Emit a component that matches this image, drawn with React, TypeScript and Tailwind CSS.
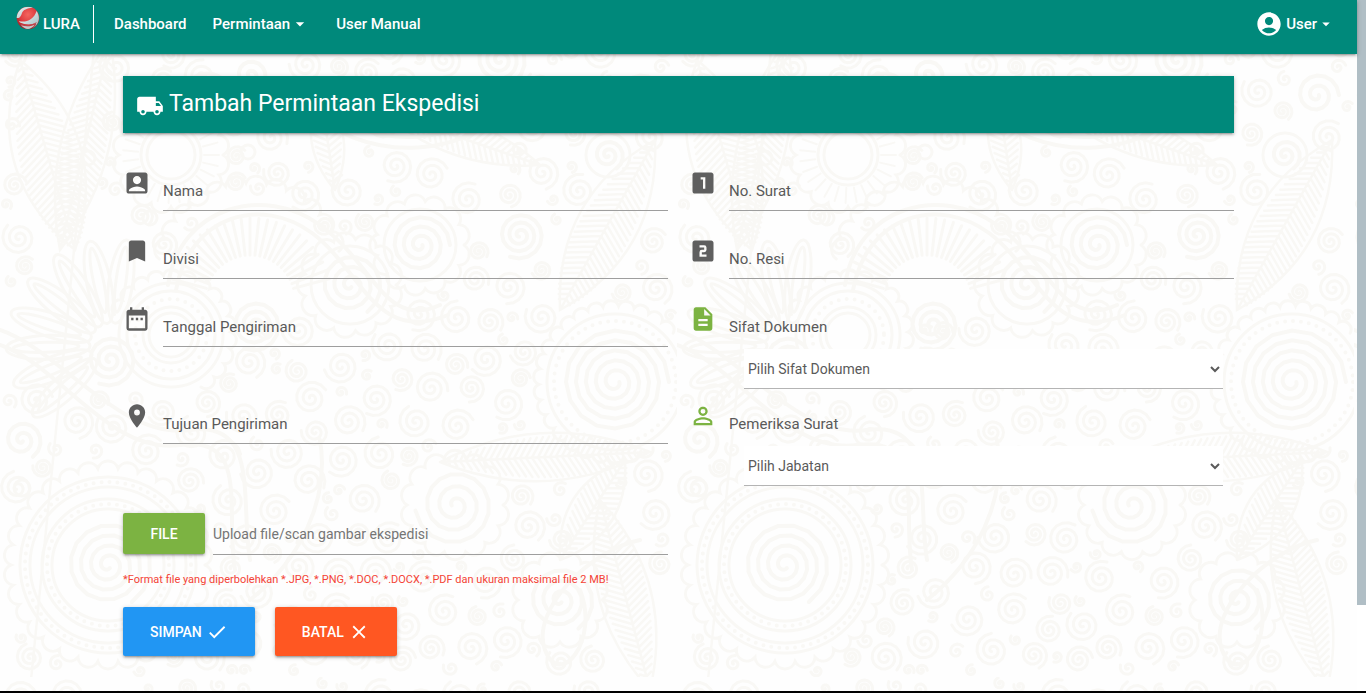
import type { ReactNode } from "react";
import type { IconType } from "react-icons";
import {
  MdAccountBox,
  MdAccountCircle,
  MdArrowDropDown,
  MdBookmark,
  MdCheck,
  MdClose,
  MdDateRange,
  MdDescription,
  MdLocalShipping,
  MdLocationOn,
  MdLooksOne,
  MdLooksTwo,
  MdPersonOutline,
} from "react-icons/md";

const RAISED =
  "shadow-[0_2px_2px_0_rgba(0,0,0,0.14),0_3px_1px_-2px_rgba(0,0,0,0.12),0_1px_5px_0_rgba(0,0,0,0.2)]";

/* ---------- batik background ---------- */

const TILE = 677;

function spiral(cx: number, cy: number, r: number, turns: number, start = 0) {
  const steps = Math.round(turns * 16);
  let d = "";
  for (let i = 0; i <= steps; i++) {
    const t = i / steps;
    const a = start + t * turns * Math.PI * 2;
    const k = r * (0.08 + 0.92 * t);
    d += `${i ? "L" : "M"}${(cx + k * Math.cos(a)).toFixed(1)} ${(cy + k * Math.sin(a)).toFixed(1)}`;
  }
  return d;
}

function fan(cx: number, cy: number, r0: number, r1: number, a0: number, a1: number, n: number) {
  let d = "";
  for (let i = 0; i <= n; i++) {
    const a = ((a0 + ((a1 - a0) * i) / n) * Math.PI) / 180;
    d += `M${(cx + r0 * Math.cos(a)).toFixed(1)} ${(cy + r0 * Math.sin(a)).toFixed(1)}L${(cx + r1 * Math.cos(a)).toFixed(1)} ${(cy + r1 * Math.sin(a)).toFixed(1)}`;
  }
  return d;
}

function scallops(cx: number, cy: number, r: number, n: number, a0 = 0, a1 = 360) {
  const point = (i: number) => {
    const a = ((a0 + ((a1 - a0) * i) / n) * Math.PI) / 180;
    return `${(cx + r * Math.cos(a)).toFixed(1)} ${(cy + r * Math.sin(a)).toFixed(1)}`;
  };
  const bump = ((((a1 - a0) / n) * Math.PI) / 180) * r * 0.52;
  let d = `M${point(0)}`;
  for (let i = 1; i <= n; i++) d += `A${bump} ${bump} 0 0 1 ${point(i)}`;
  return d;
}

function leaf(x0: number, y0: number, x1: number, y1: number, w: number) {
  const dx = x1 - x0;
  const dy = y1 - y0;
  const len = Math.hypot(dx, dy);
  const ux = dx / len;
  const uy = dy / len;
  const mx = (x0 + x1) / 2;
  const my = (y0 + y1) / 2;
  let d = `M${x0} ${y0}Q${mx - uy * w * 2} ${my + ux * w * 2} ${x1} ${y1}Q${mx + uy * w * 2} ${my - ux * w * 2} ${x0} ${y0}M${x0} ${y0}L${x1} ${y1}`;
  for (let s = 8; s < len - 8; s += 6) {
    const t = s / len;
    const half = 4 * w * t * (1 - t) * 0.85;
    const px = x0 + dx * t;
    const py = y0 + dy * t;
    const f = half * 0.6;
    d += `M${px} ${py}L${px - uy * half + ux * f} ${py + ux * half + uy * f}M${px} ${py}L${px + uy * half + ux * f} ${py - ux * half + uy * f}`;
  }
  return d;
}

const LARGE_SPIRALS: [number, number, number, number, number][] = [
  [420, 245, 30, 3, 0], [350, 285, 32, 3, 1], [110, 360, 26, 3, 2], [615, 382, 54, 5, 0],
  [455, 505, 40, 3, 3], [108, 565, 44, 4, 1], [255, 325, 26, 3, 2], [560, 600, 34, 3, 1],
  [640, 95, 22, 2, 0], [608, 155, 16, 2, 1], [250, 75, 20, 2, 3], [520, 235, 24, 3, 2],
  [500, 60, 26, 3, 1], [22, 440, 20, 2, 1],
];

const RINGS: [number, number, number][] = [
  [171, 155, 24], [171, 155, 30], [171, 335, 22], [171, 335, 28], [171, 335, 44], [171, 335, 52],
  [108, 565, 56], [108, 565, 66], [108, 565, 78], [108, 565, 88], [88, 158, 7], [248, 152, 7],
  [22, 488, 8], [608, 155, 22], [150, 218, 7], [420, 245, 36], [350, 285, 39], [615, 382, 68],
];

const BEADS: [number, number, number][] = [
  [171, 335, 36], [108, 565, 61], [108, 565, 83], [615, 382, 61],
];

const LEAVES: [number, number, number, number, number][] = [
  [20, 60, 75, 250, 34], [110, 40, 60, 250, 24], [655, 140, 560, 310, 30], [440, 462, 650, 452, 24],
  [560, 560, 625, 460, 22], [650, 690, 600, 500, 26], [380, 110, 540, 165, 18], [335, 190, 320, 90, 16],
  [30, 690, 95, 40, 0],
];

const SCALLOPS: [number, number, number, number, number, number][] = [
  [250, 275, 92, 12, 190, 345], [171, 335, 60, 14, 200, 420], [108, 565, 97, 30, 0, 360],
  [420, 245, 44, 13, 0, 360], [350, 285, 46, 13, 0, 360], [615, 382, 76, 22, 60, 320],
  [171, 155, 52, 16, 0, 360], [455, 505, 48, 14, 0, 360], [560, 600, 42, 12, 0, 360],
];

const ARCS =
  "M168 285C180 205 265 185 320 225S385 330 440 305M176 290C190 214 262 196 312 233S375 345 448 315M300 100C360 170 480 160 520 90M310 95C365 155 470 150 510 85M0 330C60 350 120 440 190 430S240 500 250 560M0 345C60 365 110 455 180 445S225 510 235 570M640 540C590 550 530 610 545 650S600 640 580 590M190 80C215 60 245 90 225 115S190 140 200 100M250 600C300 560 330 500 320 440";

/** Areas taken by the large motifs, as [x, y, radius]. */
const TAKEN: [number, number, number][] = [
  [171, 155, 55], [171, 335, 62], [108, 565, 102], [615, 382, 80], [420, 245, 48], [350, 285, 50],
  [455, 505, 52], [560, 600, 46], [255, 260, 62], [60, 100, 45], [60, 150, 45], [70, 210, 35],
  [100, 290, 60], [50, 330, 50], [110, 360, 30], [640, 95, 26], [608, 155, 28], [250, 75, 24],
  [640, 190, 32], [600, 240, 34], [575, 285, 26], [520, 235, 28], [500, 60, 30], [490, 458, 20],
  [540, 455, 28], [590, 455, 26], [595, 510, 30], [615, 560, 32], [635, 620, 34], [645, 660, 26],
  [430, 130, 26], [480, 145, 26], [330, 140, 28], [22, 440, 24], [350, 140, 14],
];

/** Packs small spirals into the space left between the large motifs. */
function packSpirals() {
  const placed: [number, number, number][] = [];
  let seed = 7;
  const random = () => {
    seed = (seed * 16807) % 2147483647;
    return seed / 2147483647;
  };
  for (const r of [17, 14, 12, 10, 8, 6]) {
    for (let i = 0; i < 1400; i++) {
      const x = r + random() * (TILE - 2 * r);
      const y = r + random() * (TILE - 2 * r);
      const free =
        TAKEN.every(([a, b, c]) => Math.hypot(x - a, y - b) > r + c) &&
        placed.every(([a, b, c]) => Math.hypot(x - a, y - b) > r + c + 1);
      if (free) placed.push([x, y, r]);
    }
  }
  return placed;
}

const SMALL_SPIRALS = packSpirals()
  .map(([x, y, r], i) => spiral(x, y, r, r > 9 ? 2.4 : 1.4, i * 1.7))
  .join("");

const PETALS = [138, 158, 178, 198, 218, 238, 258, 278];

function BatikBackground() {
  return (
    <svg aria-hidden="true" className="absolute inset-0 h-full w-full">
      <defs>
        <pattern id="batik" width={TILE} height={TILE} patternUnits="userSpaceOnUse">
          <g fill="none" stroke="#f9f8f5" strokeWidth="3" strokeLinecap="round">
            {LEAVES.map((v, i) => (
              <path key={i} d={leaf(...v)} strokeWidth="2.5" />
            ))}
            <path d={ARCS} strokeWidth="4" />
            <path d={fan(250, 300, 45, 82, 195, 345, 24)} />
            <path d={fan(171, 155, 33, 48, 0, 345, 26)} strokeWidth="2" />
            {PETALS.map((a) => (
              <g key={a} transform={`translate(112 345) rotate(${a})`}>
                <ellipse cx="64" cy="0" rx="42" ry="12" />
                <ellipse cx="66" cy="0" rx="33" ry="5" />
              </g>
            ))}
            {LARGE_SPIRALS.map(([x, y, r, n, s], i) => (
              <path key={i} d={spiral(x, y, r, n, s)} strokeWidth="4" />
            ))}
            {SCALLOPS.map((v, i) => (
              <path key={i} d={scallops(...v)} />
            ))}
            <path d={SMALL_SPIRALS} />
            {RINGS.map(([x, y, r], i) => (
              <circle key={i} cx={x} cy={y} r={r} />
            ))}
            {BEADS.map(([x, y, r], i) => (
              <circle key={i} cx={x} cy={y} r={r} strokeWidth="4" strokeDasharray="0 8" />
            ))}
          </g>
        </pattern>
      </defs>
      <rect width="100%" height="100%" fill="#fefefe" />
      <rect width="100%" height="100%" fill="url(#batik)" />
    </svg>
  );
}

/* ---------- header ---------- */

function Logo() {
  return (
    <svg viewBox="0 0 24 24" aria-hidden="true" className="mb-3 h-6 w-6">
      <defs>
        <radialGradient id="ball" cx="0.5" cy="0.35" r="0.7">
          <stop offset="0" stopColor="#f4655f" />
          <stop offset="0.55" stopColor="#dd3a3f" />
          <stop offset="1" stopColor="#8f1a22" />
        </radialGradient>
        <linearGradient id="silver" x1="0" y1="0" x2="1" y2="1">
          <stop offset="0" stopColor="#f4f6f6" />
          <stop offset="1" stopColor="#9dbcc2" />
        </linearGradient>
      </defs>
      <circle cx="12" cy="12" r="11.3" fill="url(#ball)" />
      <path d="M.7 12C1 6 5 1.500 11 1C14 .8 16 1.500 17 2C11 2 7 4 6 7C5 10 4 12.500 .7 12Z" fill="url(#silver)" />
      <path d="M3 15C9 17 18 14 20.500 5C25 11 23 19 16 22.500C19 20.500 20 19 20 17C16 19 9 19 4 16.500Z" fill="url(#silver)" />
      <path d="M5 19C10 21 15 20.500 19 18.500C17 21.500 14 22.800 12 23C9 22.800 7 21.500 5 19Z" fill="#c3c9cb" />
      <path d="M4.500 18.300C10 20.300 16 19.500 20.500 16.500" fill="none" stroke="#c24a50" strokeWidth="0.8" />
    </svg>
  );
}

function Header() {
  return (
    <header
      className={`relative z-10 flex h-[54px] items-center bg-[#00897b] pr-[22px] pb-1.5 pl-4 text-[15px] font-medium text-white ${RAISED}`}
    >
      <a href="#" className="flex items-center gap-[3px]">
        <Logo />
        LURA
      </a>
      <nav className="ml-[13px] flex h-[38px] items-center border-l border-white pl-5">
        <a href="#">Dashboard</a>
        <a href="#" className="ml-[26px] flex items-center">
          Permintaan
          <MdArrowDropDown className="size-5" />
        </a>
        <a href="#" className="ml-[26px]">
          User Manual
        </a>
      </nav>
      <a href="#" className="ml-auto flex items-center">
        <MdAccountCircle className="mr-[3px] size-7" />
        User
        <MdArrowDropDown className="size-[18px]" />
      </a>
    </header>
  );
}

/* ---------- form ---------- */

interface FieldProps {
  id: string;
  label: string;
  icon: IconType;
}

function TextField({ id, label, icon: Icon }: FieldProps) {
  return (
    <div className="flex h-[43px] gap-3">
      <Icon className="mt-px size-7 shrink-0 text-[#5f5f5f]" />
      <div className="relative flex-1">
        <label htmlFor={id} className="absolute top-3 left-0 text-[15px] leading-[22px]">
          {label}
        </label>
        <input
          id={id}
          type="text"
          className="h-full w-full border-b border-[#9e9e9e] bg-transparent outline-none"
        />
      </div>
    </div>
  );
}

function SelectField({ id, label, icon: Icon, option }: FieldProps & { option: string }) {
  return (
    <div>
      <div className="flex h-[43px] gap-3">
        <Icon className="mt-px size-7 shrink-0 text-[#7cb342]" />
        <label htmlFor={id} className="pt-3 text-[15px] leading-[22px]">
          {label}
        </label>
      </div>
      <div className="mt-0.5 mr-[11px] ml-[55px]">
        <select
          id={id}
          className="h-10 w-full border-b border-[#b4b4b4] bg-white text-sm outline-none"
        >
          <option>{option}</option>
        </select>
      </div>
    </div>
  );
}

function ActionButton({ className, children }: { className: string; children: ReactNode }) {
  return (
    <button
      type="button"
      className={`flex h-[49px] items-center rounded-xs px-[27px] text-sm font-medium text-white ${RAISED} ${className}`}
    >
      {children}
    </button>
  );
}

export default function App() {
  return (
    <div className="flex min-h-screen border-b-2 border-black bg-white font-[Roboto,sans-serif] text-[#5a5a5a]">
      <div className="relative flex-1">
        <BatikBackground />
        <Header />
        <main className="relative mx-auto mt-[22px] max-w-[1111px]">
          <h1
            className={`flex h-[57px] items-center gap-[5px] bg-[#00897b] px-[13px] text-[23px] text-white ${RAISED}`}
          >
            <MdLocalShipping className="mt-0.5 size-7" />
            Tambah Permintaan Ekspedisi
          </h1>
          <form className="mt-[35px]">
            <div className="grid grid-cols-2 gap-x-[21px]">
              <div className="flex flex-col gap-[25px]">
                <TextField id="nama" label="Nama" icon={MdAccountBox} />
                <TextField id="divisi" label="Divisi" icon={MdBookmark} />
                <TextField id="tanggal" label="Tanggal Pengiriman" icon={MdDateRange} />
                <div className="pt-[29px]">
                  <TextField id="tujuan" label="Tujuan Pengiriman" icon={MdLocationOn} />
                </div>
              </div>
              <div className="flex flex-col gap-[25px]">
                <TextField id="surat" label="No. Surat" icon={MdLooksOne} />
                <TextField id="resi" label="No. Resi" icon={MdLooksTwo} />
                <div className="flex flex-col gap-3">
                  <SelectField id="sifat" label="Sifat Dokumen" icon={MdDescription} option="Pilih Sifat Dokumen" />
                  <SelectField id="pemeriksa" label="Pemeriksa Surat" icon={MdPersonOutline} option="Pilih Jabatan" />
                </div>
              </div>
              <div className="mt-[27px] flex gap-2">
                <label
                  htmlFor="file"
                  className={`flex h-[41px] w-[82px] cursor-pointer items-center justify-center rounded-xs bg-[#7cb342] text-sm font-medium text-white ${RAISED}`}
                >
                  FILE
                </label>
                <input id="file" type="file" className="sr-only" />
                <input
                  type="text"
                  aria-label="Upload file"
                  placeholder="Upload file/scan gambar ekspedisi"
                  className="h-[42px] flex-1 border-b border-[#9e9e9e] bg-transparent text-sm outline-none placeholder:text-[#757575]"
                />
              </div>
            </div>
            <p className="mt-4 text-[11px] leading-[18px] text-[#f44336]">
              *Format file yang diperbolehkan *.JPG, *.PNG, *.DOC, *.DOCX, *.PDF dan ukuran maksimal file 2 MB!
            </p>
            <div className="mt-[18px] flex gap-5 pb-[35px]">
              <ActionButton className="bg-[#2196f3]">
                SIMPAN
                <MdCheck className="ml-1 size-[22px]" />
              </ActionButton>
              <ActionButton className="bg-[#ff5722]">
                BATAL
                <MdClose className="ml-1 size-[22px]" />
              </ActionButton>
            </div>
          </form>
        </main>
      </div>
      <div aria-hidden="true" className="flex w-[9px] flex-col bg-white">
        <div className="flex-[7] bg-[#b0bec5]" />
        <div className="flex-1" />
      </div>
    </div>
  );
}
